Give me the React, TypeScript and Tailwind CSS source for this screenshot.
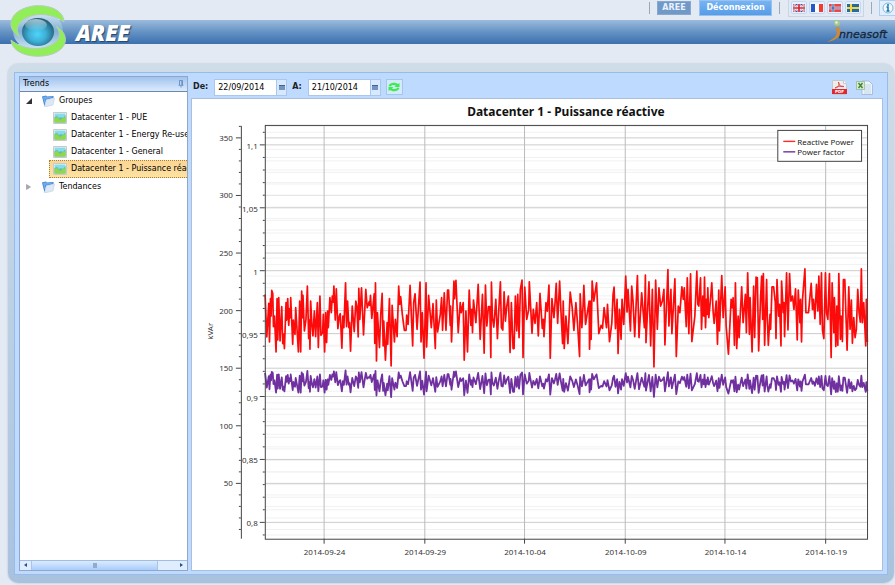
type Point = [number, number];

const blocks: { x: number; y: number; samples: Point[] }[] = [
  {
    x: 190,
    y: 100,
    samples: [
      [223, 585], [228, 713], [234, 612], [236, 728], [239, 598], [241, 650], [243, 573], [246, 582], [248, 682], [251, 650],
      [256, 758], [259, 598], [261, 722], [264, 595], [268, 725], [273, 622], [276, 733], [278, 704], [281, 748], [286, 610],
      [288, 662], [291, 598], [294, 678], [297, 628], [299, 655], [300, 595], [306, 735], [308, 662], [310, 690], [313, 705],
      [315, 625], [323, 758], [327, 605], [330, 758], [333, 575], [336, 655], [337, 588], [341, 695], [346, 660], [350, 560],
      [354, 718], [356, 662], [358, 750], [360, 605], [364, 680], [367, 710], [371, 635], [375, 712], [380, 610], [383, 745],
      [388, 590], [391, 708], [396, 700], [398, 645], [402, 758], [405, 640], [408, 730], [411, 635], [413, 685], [418, 595],
      [422, 640], [425, 590], [428, 608], [430, 560], [434, 662], [437, 568], [442, 688], [446, 650], [449, 643], [454, 747],
      [457, 650], [460, 685], [465, 550], [468, 682], [471, 605], [475, 685], [477, 670], [480, 756], [485, 620], [491, 697],
      [496, 605], [499, 620], [503, 713], [505, 567], [508, 660], [513, 565], [519, 707], [526, 570], [530, 625], [536, 607],
      [538, 618], [540, 588], [544, 657], [551, 583], [553, 732], [555, 550], [558, 785], [561, 640], [567, 745], [571, 645],
      [575, 582], [578, 740], [580, 665], [585, 783], [590, 670], [592, 735], [597, 598],
    ],
  },
  {
    x: 380,
    y: 250,
    samples: [
      [32, 350], [35, 168], [42, 278], [45, 210], [50, 262], [55, 110], [58, 165], [61, 142], [66, 197], [72, 243], [77, 243],
      [79, 197], [83, 225], [89, 108], [97, 290], [100, 160], [104, 133], [110, 240], [119, 98], [122, 278], [126, 190],
      [131, 327], [137, 100], [139, 293], [145, 138], [153, 235], [158, 163], [165, 298], [168, 152], [172, 248], [180, 195],
      [184, 145], [187, 243], [192, 130], [197, 243], [202, 122], [205, 122], [210, 228], [211, 170], [214, 278], [221, 95],
      [223, 148], [227, 93], [234, 250], [240, 160], [243, 190], [249, 160], [252, 333], [257, 185], [262, 308], [267, 122],
      [272, 228], [275, 180], [277, 250], [280, 152], [287, 220], [294, 105], [300, 270], [307, 135], [312, 312], [316, 107],
      [320, 230], [325, 172], [329, 172], [332, 325], [334, 98], [337, 205], [341, 233], [347, 150], [352, 268], [356, 180],
      [361, 97], [364, 235], [368, 242], [372, 127], [376, 215], [380, 170], [385, 140], [390, 310], [394, 160], [399, 298],
      [402, 298], [406, 140], [410, 245], [413, 135], [417, 265], [421, 120], [426, 92], [429, 325], [434, 113], [440, 210],
      [446, 180], [448, 97], [456, 252], [460, 180], [465, 222], [470, 160], [475, 260], [480, 132], [487, 237], [490, 210],
      [492, 262], [498, 160], [502, 185], [507, 107], [511, 327], [516, 148], [522, 205], [525, 165], [529, 102], [533, 222],
      [539, 95], [543, 185], [548, 283], [550, 155], [553, 298], [558, 200], [564, 283], [571, 128], [577, 175], [582, 243],
      [588, 160], [593, 225], [599, 322], [601, 133], [606, 235], [610, 165], [612, 108], [617, 225], [624, 180], [628, 155],
      [629, 300], [633, 155], [634, 270], [637, 95], [642, 155], [650, 100], [657, 253], [664, 228], [668, 237], [673, 175],
      [680, 235], [683, 165], [689, 277], [696, 222], [700, 135], [703, 113], [707, 238], [712, 150], [715, 313], [719, 180],
      [724, 270], [727, 150], [732, 225], [738, 80], [742, 188], [745, 120], [752, 245], [756, 110], [760, 155], [765, 262],
      [773, 78], [778, 265], [786, 130], [794, 235], [797, 77], [799, 280], [808, 97], [813, 290], [818, 120], [823, 353],
      [828, 92], [833, 240], [838, 115], [843, 170], [848, 155], [853, 120], [856, 287], [865, 60], [868, 230], [874, 120],
      [877, 253], [886, 88], [890, 322], [896, 170], [901, 190], [907, 112], [911, 150], [914, 115], [920, 232], [923, 85],
      [928, 253], [933, 73], [937, 277], [946, 200], [952, 65], [955, 165], [958, 170], [963, 85], [966, 240], [970, 140],
      [973, 200], [975, 83], [978, 235], [981, 150], [983, 195], [985, 115], [988, 205],
    ],
  },
  {
    x: 700,
    y: 100,
    samples: [
      [32, 610], [37, 550], [41, 640], [44, 672], [50, 605], [54, 735], [58, 572], [60, 695], [67, 528], [71, 655], [77, 562],
      [80, 680], [87, 765], [95, 600], [98, 625], [101, 595], [105, 738], [108, 550], [112, 748], [116, 650], [119, 715],
      [127, 562], [131, 670], [138, 585], [141, 700], [145, 520], [150, 705], [152, 595], [158, 758], [163, 560], [166, 715],
      [170, 533], [174, 535], [178, 755], [184, 590], [187, 530], [190, 660], [192, 522], [196, 738], [202, 540], [204, 655],
      [207, 738], [212, 645], [214, 690], [218, 562], [223, 562], [228, 610], [230, 718], [233, 540], [238, 650], [241, 615],
      [245, 740], [247, 545], [252, 640], [254, 610], [256, 712], [262, 520], [266, 692], [271, 522], [275, 605], [280, 590],
      [284, 630], [289, 568], [294, 722], [297, 572], [302, 670], [304, 600], [307, 728], [310, 600], [317, 508], [320, 640],
      [328, 640], [336, 552], [340, 630], [343, 600], [347, 658], [352, 555], [356, 635], [359, 530], [363, 675], [367, 520],
      [370, 692], [374, 718], [379, 520], [382, 640], [386, 660], [391, 522], [396, 775], [399, 550], [404, 700], [406, 595],
      [410, 742], [413, 620], [416, 738], [419, 522], [424, 720], [426, 650], [430, 727], [433, 540], [437, 540], [444, 753],
      [449, 562], [453, 690], [457, 602], [460, 732], [464, 655], [468, 715], [472, 690], [476, 570], [480, 640], [484, 668],
      [487, 508], [490, 670], [494, 610], [500, 740], [502, 600], [505, 728],
    ],
  },
];

const power: Point[] = blocks.flatMap(({ x, y, samples }) => samples.map(([sx, sy]): Point => [x + sx / 3, y + sy / 3]));

// The power factor follows the load, with a swing that narrows over time
const factor: Point[] = power.map(([x, y]) => {
  const t = (x - 264) / 604;
  return [x, 382 + t * 5 + (y - 319) * (0.34 - t * 0.13)];
});

const toLine = (points: Point[]) => points.map(([x, y]) => `${x.toFixed(1)},${y.toFixed(1)}`).join(" ");

const kvarAt = (value: number) => 138 + (350 - value) * 1.155;
const factorAt = (value: number) => 145 + (1100 - value) * 1.262;

const kvarTicks = Array.from({ length: 36 }, (_, i) => (i + 1) * 10);
const factorTicks = Array.from({ length: 33 }, (_, i) => 790 + i * 10).filter((v) => v <= 1110);

const dates = [
  { label: "2014-09-24", x: 324 },
  { label: "2014-09-29", x: 425 },
  { label: "2014-10-04", x: 525 },
  { label: "2014-10-09", x: 626 },
  { label: "2014-10-14", x: 726 },
  { label: "2014-10-19", x: 827 },
];

function TrendChart() {
  return (
    <svg viewBox="191 99 692 472" className="block w-full font-['Noto_Sans',sans-serif]" role="img" aria-label="Puissance réactive">
      <text x="566" y="116" textAnchor="middle" className="text-[12px] font-bold" fill="#111">
        Datacenter 1 - Puissance réactive
      </text>
      <g strokeWidth="1">
        {kvarTicks.map((v) => (
          <path key={v} d={`M264 ${kvarAt(v)}H868`} stroke={v % 50 === 0 ? "#cdcdcd" : "#f1f1f1"} />
        ))}
        {factorTicks.map((v) => (
          <path key={v} d={`M264 ${factorAt(v)}H868`} stroke={v % 50 === 0 ? "#cdcdcd" : "#f1f1f1"} />
        ))}
        {dates.map((d) => (
          <path key={d.label} d={`M${d.x - 0.5} 126V540`} stroke="#bbb" />
        ))}
      </g>
      <polyline points={toLine(power)} fill="none" stroke="#fd0b0b" strokeWidth="1.7" strokeLinejoin="round" />
      <polyline points={toLine(factor)} fill="none" stroke="#7030a0" strokeWidth="1.8" strokeLinejoin="round" />
      <g stroke="#444" fill="none">
        <rect x="264.5" y="125.5" width="604" height="415" />
        <path d="M240.5 126V540" />
        {kvarTicks.map((v) => (
          <path key={v} d={`M${v % 50 === 0 ? 235 : 238} ${kvarAt(v)}H240`} />
        ))}
        {factorTicks.map((v) => (
          <path key={v} d={`M${v % 50 === 0 ? 259 : 262} ${factorAt(v)}H264`} />
        ))}
        {dates.map((d) => (
          <path key={d.label} d={`M${d.x - 0.5} 540V545`} />
        ))}
      </g>
      <g fill="#333" className="text-[8px]">
        {kvarTicks.filter((v) => v % 50 === 0).map((v) => (
          <text key={v} x="232" y={kvarAt(v) + 3} textAnchor="end">
            {v}
          </text>
        ))}
        {factorTicks.filter((v) => v % 50 === 0).map((v) => (
          <text key={v} x="257" y={factorAt(v) + 4} textAnchor="end">
            {String(v / 1000).replace(".", ",")}
          </text>
        ))}
        {dates.map((d) => (
          <text key={d.label} x={d.x} y="556" textAnchor="middle">
            {d.label}
          </text>
        ))}
        <text transform="translate(212 332) rotate(-90)" textAnchor="middle">
          kVAr
        </text>
      </g>
      <rect x="778.5" y="130.5" width="84" height="31" fill="#fff" stroke="#444" />
      <path d="M784 141.5H796" stroke="#fd2b2b" strokeWidth="1.4" />
      <path d="M784 152H796" stroke="#7030a0" strokeWidth="1.4" />
      <g fill="#222" className="text-[8px]">
        <text x="798" y="145">Reactive Power</text>
        <text x="798" y="155">Power factor</text>
      </g>
    </svg>
  );
}

function Globe() {
  return (
    <svg viewBox="0 0 60 54" className="h-[54px] w-[60px]" aria-hidden="true">
      <defs>
        <radialGradient id="globe" cx="48%" cy="58%" r="60%">
          <stop offset="0" stopColor="#50d4fa" />
          <stop offset=".45" stopColor="#3eafd5" />
          <stop offset="1" stopColor="#1f566e" />
        </radialGradient>
        <linearGradient id="halo" x2="0" y2="1">
          <stop offset="0" stopColor="#dcecf6" />
          <stop offset=".5" stopColor="#7faed5" />
          <stop offset="1" stopColor="#d3ebf8" />
        </linearGradient>
        <linearGradient id="shine" x2="0" y2="1">
          <stop offset="0" stopColor="#fff" stopOpacity=".6" />
          <stop offset="1" stopColor="#fff" stopOpacity="0" />
        </linearGradient>
      </defs>
      <ellipse cx="30" cy="26" rx="25" ry="20" fill="url(#halo)" />
      <path d="M12 32C-3 24 0 5 25 1 42-1 56 6 56 17 46 9 29 7 18 13 9 18 7 25 12 32Z" fill="#91ee58" stroke="#b4cdb8" />
      <path d="M48 21C62 29 61 45 41 50 23 54 4 48 3 35 15 45 34 46 45 39 53 34 53 28 48 21Z" fill="#91ee58" stroke="#b4cdb8" />
      <ellipse cx="30" cy="27" rx="16" ry="14" fill="url(#globe)" />
      <ellipse cx="28" cy="20" rx="11" ry="6" fill="url(#shine)" />
    </svg>
  );
}

function Brand() {
  return (
    <svg viewBox="0 0 68 24" className="h-6 w-[68px]" role="img" aria-label="inneasoft">
      <path d="M11 7C17 11 13 20 0 22 8 18 13 14 8 8Z" fill="#d08a35" />
      <circle cx="10" cy="3" r="3" fill="#a5c98a" />
      <circle cx="9.5" cy="2.5" r="1.3" fill="#e5f3d8" />
      <text x="12" y="18" fill="#16253a" className="font-['DejaVu_Sans',sans-serif] text-[11px] italic" stroke="#16253a" strokeWidth=".3">
        nneasoft
      </text>
    </svg>
  );
}

function Flag({ country }: { country: string }) {
  return (
    <svg viewBox="0 0 12 8" className="h-2 w-3" aria-hidden="true">
      {country === "English" && (
        <>
          <path fill="#33478a" d="M0 0h12v8H0z" />
          <path d="m0 0 12 8M12 0 0 8" stroke="#fff" strokeWidth="2" />
          <path d="m0 0 12 8M12 0 0 8" stroke="#d32638" strokeWidth=".8" />
          <path d="M6 0v8M0 4h12" stroke="#fff" strokeWidth="3" />
          <path d="M6 0v8M0 4h12" stroke="#d32638" strokeWidth="1.7" />
        </>
      )}
      {country === "Français" && (
        <>
          <path fill="#fff" d="M0 0h12v8H0z" />
          <path fill="#2558c4" d="M0 0h4v8H0z" />
          <path fill="#f33a32" d="M8 0h4v8H8z" />
        </>
      )}
      {country === "Norsk" && (
        <>
          <path fill="#f04444" d="M0 0h12v8H0z" />
          <path d="M4 0v8M0 4h12" stroke="#fff" strokeWidth="2.4" />
          <path d="M4 0v8M0 4h12" stroke="#294e9b" strokeWidth="1.2" />
        </>
      )}
      {country === "Svenska" && (
        <>
          <path fill="#236ba0" d="M0 0h12v8H0z" />
          <path d="M4 0v8M0 4h12" stroke="#f5d53b" strokeWidth="2" />
        </>
      )}
    </svg>
  );
}

function FolderIcon() {
  return (
    <svg viewBox="0 0 13 12" className="h-3 w-[13px] shrink-0" aria-hidden="true">
      <path d="M0 1.500 4 .500l1 1L11.500 1v2L4 5 2.500 11.500Z" fill="#3c83d8" />
      <path d="m1 2 3-.7 1 .8 5.500-.6v1L3.500 4 2.500 9Z" fill="#6fabea" />
      <path d="M4.500 4.500 12.500 3l-1.500 7-8.500 2Z" fill="#dce9f5" stroke="#b3cbe2" strokeWidth=".5" />
    </svg>
  );
}

function ChartIcon() {
  return (
    <svg viewBox="0 0 14 12" className="h-3 w-3.5 shrink-0" aria-hidden="true">
      <path d="M.5.500h13v11H.500z" fill="#f7f7f7" stroke="#c9c9c9" />
      <path d="M1.500 1.500h11v9h-11z" fill="#86dce8" />
      <path d="M1.500 5 4 4l2 2 2-1 2 1 2.500-3v7.500h-11Z" fill="#5fbfae" />
      <path d="M1.500 6 4 5l3 3 3-2 2.500-1v5.500h-11Z" fill="#91d746" />
    </svg>
  );
}

function PinIcon() {
  return (
    <svg viewBox="0 0 6 8" className="h-2 w-1.5" aria-hidden="true">
      <path d="M1.500 5V.500h3V5M.5 5.300h5M3 5.500V7.500M3.800 1v4" fill="none" stroke="#5c84bd" strokeWidth=".8" />
    </svg>
  );
}

function DateField({ id, label, value }: { id: string; label: string; value: string }) {
  return (
    <div className="flex items-center">
      <label htmlFor={id} className="mr-1.5 font-bold">
        {label}
      </label>
      <input id={id} defaultValue={value} className="h-[17px] w-[63px] border border-[#a9c7ec] bg-white px-[3px] text-black outline-none" />
      <button aria-label="Calendrier" className="flex h-[17px] w-2.5 items-center justify-center border border-l-0 border-[#a9c7ec] bg-[#d8e9fd]">
        <span className="h-[5px] w-1.5 border-t border-[#3d659a] bg-[#7394c0]" />
      </button>
    </div>
  );
}

const trends = ["Datacenter 1 - PUE", "Datacenter 1 - Energy Re-use", "Datacenter 1 - General", "Datacenter 1 - Puissance réactive"];

export default function App() {
  return (
    <div className="min-h-screen overflow-hidden bg-[#e3eaf4] font-['DejaVu_Sans',Verdana,sans-serif] text-[8px] leading-none text-[#222]">
      <header className="relative">
        <div className="flex h-5 items-start justify-end">
          <span className="mt-0.5 mr-[7px] h-3 w-px bg-[#9ba8b8]" />
          <button className="mt-px mr-2 h-[14px] w-[34px] border border-[#88a8cf] bg-[#7199c7] font-bold text-[#e9f2ff]">AREE</button>
          <button className="mr-[7px] h-4 w-[73px] border border-[#9ac2ee] bg-linear-to-b from-[#76b4f3] to-[#569ce6] font-bold text-white">Déconnexion</button>
          <span className="mt-0.5 mr-2 h-3 w-px bg-[#9ba8b8]" />
          <div className="mr-[7px] flex gap-0.5 border border-t-0 border-[#c7d5e6] px-0.5 pt-px pb-0.5">
            {["English", "Français", "Norsk", "Svenska"].map((country) => (
              <button key={country} aria-label={country} className="flex h-[13px] w-4 items-center justify-center rounded-xs border border-[#c3d9f3] bg-[#e7f1fd]">
                <Flag country={country} />
              </button>
            ))}
          </div>
          <span className="mt-0.5 mr-[7px] h-3 w-px bg-[#9ba8b8]" />
          <button aria-label="Informations" className="flex h-4 w-4 items-center justify-center border border-r-0 border-[#abd0f3] bg-[#e2effc]">
            <svg viewBox="0 0 12 12" className="size-3" aria-hidden="true">
              <circle cx="6" cy="6" r="5" fill="#eff9ff" stroke="#88b7d0" />
              <path d="M6 2v2M4.500 5H6v4M4.500 9h3" stroke="#1376b0" strokeWidth="1.5" fill="none" />
            </svg>
          </button>
        </div>
        <div className="flex h-6 items-center justify-between bg-linear-to-b from-[#9bbbdc] via-[#6492c4] to-[#3b70ae] pl-[76px]">
          <h1 className="font-['Open_Sans',sans-serif] text-[22px] leading-6 font-extrabold text-white italic [text-shadow:1px_1px_1px_#254566]">AREE</h1>
          <Brand />
        </div>
        <div className="absolute top-[5px] left-2">
          <Globe />
        </div>
      </header>

      <main className="mt-5 mr-px ml-2 rounded-[10px] bg-linear-to-b from-[#cfdde9] to-[#a8c2de] px-1.5 pt-2 pb-2 shadow-[0_0_2px_#a7b5c5]">
        <div className="flex border border-[#98bbe8] bg-[#bedaff] p-1 pt-[3px] pb-[3px]">
          <aside className="mr-[3px] flex w-[169px] shrink-0 flex-col overflow-hidden border border-[#8fa8c9] bg-white">
            <div className="flex h-[15px] shrink-0 items-center justify-between border-b border-[#6d88ad] bg-linear-to-b from-[#a1c3ed] to-[#dcebfd] px-[3px]">
              <h2 className="text-black">Trends</h2>
              <PinIcon />
            </div>
            <nav className="flex-1 overflow-hidden whitespace-nowrap text-black">
              <div className="flex h-[17px] items-center">
                <svg viewBox="0 0 6 6" className="mr-2.5 ml-1.5 size-1.5" aria-hidden="true">
                  <path d="M6 0v6H0Z" fill="#333" />
                </svg>
                <FolderIcon />
                <span className="ml-1">Groupes</span>
              </div>
              {trends.map((trend, i) => (
                <a
                  key={trend}
                  href="#"
                  className={
                    i === 3
                      ? "ml-[29px] flex h-[18px] items-center gap-1 border border-r-0 border-dotted border-[#a58035] bg-linear-to-b from-[#fbd594] to-[#fde2a1] pl-[3px]"
                      : "ml-[29px] flex h-[17px] items-center gap-1 pl-1"
                  }
                >
                  <ChartIcon />
                  {trend}
                </a>
              ))}
              <div className="flex h-[17px] items-center">
                <svg viewBox="0 0 6 6" className="mr-2.5 ml-1.5 size-1.5" aria-hidden="true">
                  <path d="m.5.500 4 2.500-4 2.500Z" fill="#aaa" stroke="#888" strokeWidth=".5" />
                </svg>
                <FolderIcon />
                <span className="ml-1">Tendances</span>
              </div>
            </nav>
            <div className="flex h-2.5 shrink-0 items-stretch border-t border-[#a0bde4] bg-[#e0edfe] text-[#24518f]">
              <button aria-label="Gauche" className="flex w-3 items-center justify-center border-r border-[#a6c5eb]">
                <svg viewBox="0 0 4 4" className="size-1" aria-hidden="true">
                  <path d="M3 0v4L0 2Z" fill="currentColor" />
                </svg>
              </button>
              <div className="flex w-[126px] items-center justify-center border-r border-[#a6c5eb] bg-linear-to-b from-[#dbeafe] to-[#a9cdfa]">
                <span className="h-[5px] w-1 bg-[#91abca]" />
              </div>
              <button aria-label="Droite" className="ml-auto flex w-3 items-center justify-center">
                <svg viewBox="0 0 4 4" className="size-1" aria-hidden="true">
                  <path d="M1 0v4l3-2Z" fill="currentColor" />
                </svg>
              </button>
            </div>
          </aside>

          <section className="min-w-0 flex-1">
            <div className="flex h-[22px] items-center gap-[5px] pl-0.5">
              <DateField id="from" label="De:" value="22/09/2014" />
              <DateField id="to" label="A:" value="21/10/2014" />
              <button aria-label="Actualiser" className="flex h-4 w-[17px] items-center justify-center border border-[#a2c6ec] bg-[#d5e8fc]">
                <svg viewBox="0 0 14 12" className="h-3 w-3.5" aria-hidden="true">
                  <path d="M1.500 5C3 1 8 1 11 3l1.500-1v4H7.500L9 4.500C7 3.500 4 4 3.500 5.500ZM12.500 7c-1.500 4-6.500 4-9.500 2l-1.500 1V6h5L5 7.500c2 1 5 .5 5.500-1Z" fill="#37ee4a" />
                </svg>
              </button>
              <button aria-label="PDF" className="ml-auto">
                <svg viewBox="0 0 15 15" className="size-[15px]" aria-hidden="true">
                  <path d="M.5.500h11l3 3v11H.500z" fill="#eceeee" stroke="#c5c9cc" />
                  <path d="M11.500.500v3h3" fill="#fff" stroke="#c5c9cc" />
                  <path d="M3 8c5-1 4-4 3.500-6C7 6 9 7 12 6.500 8 5.500 5 6.500 3 8Z" fill="none" stroke="#e2474a" />
                  <path d="M0 9h15v5H0z" fill="#df2832" />
                  <text x="3" y="13" fill="#fff" className="text-[4px] font-bold">PDF</text>
                </svg>
              </button>
              <button aria-label="Excel" className="mr-2.5 ml-1">
                <svg viewBox="0 0 17 15" className="h-[15px] w-[17px]" aria-hidden="true">
                  <path d="M6 1h7l3.500 3.500v10H6z" fill="#edf4fb" stroke="#9db5cf" strokeWidth=".8" />
                  <path d="M9 5h6M9 7h6M8 9h7M8 11h7M8 13h7" stroke="#c3d6ea" />
                  <path d="M.5 1.500h8v8h-8z" fill="#d9ead2" stroke="#84ad7a" strokeWidth=".6" />
                  <path d="m2.500 3 4 5M6.500 3l-4 5" stroke="#438838" strokeWidth="1.5" />
                </svg>
              </button>
            </div>
            <div className="border border-[#a9bfdc] bg-white">
              <TrendChart />
            </div>
          </section>
        </div>
      </main>
    </div>
  );
}
